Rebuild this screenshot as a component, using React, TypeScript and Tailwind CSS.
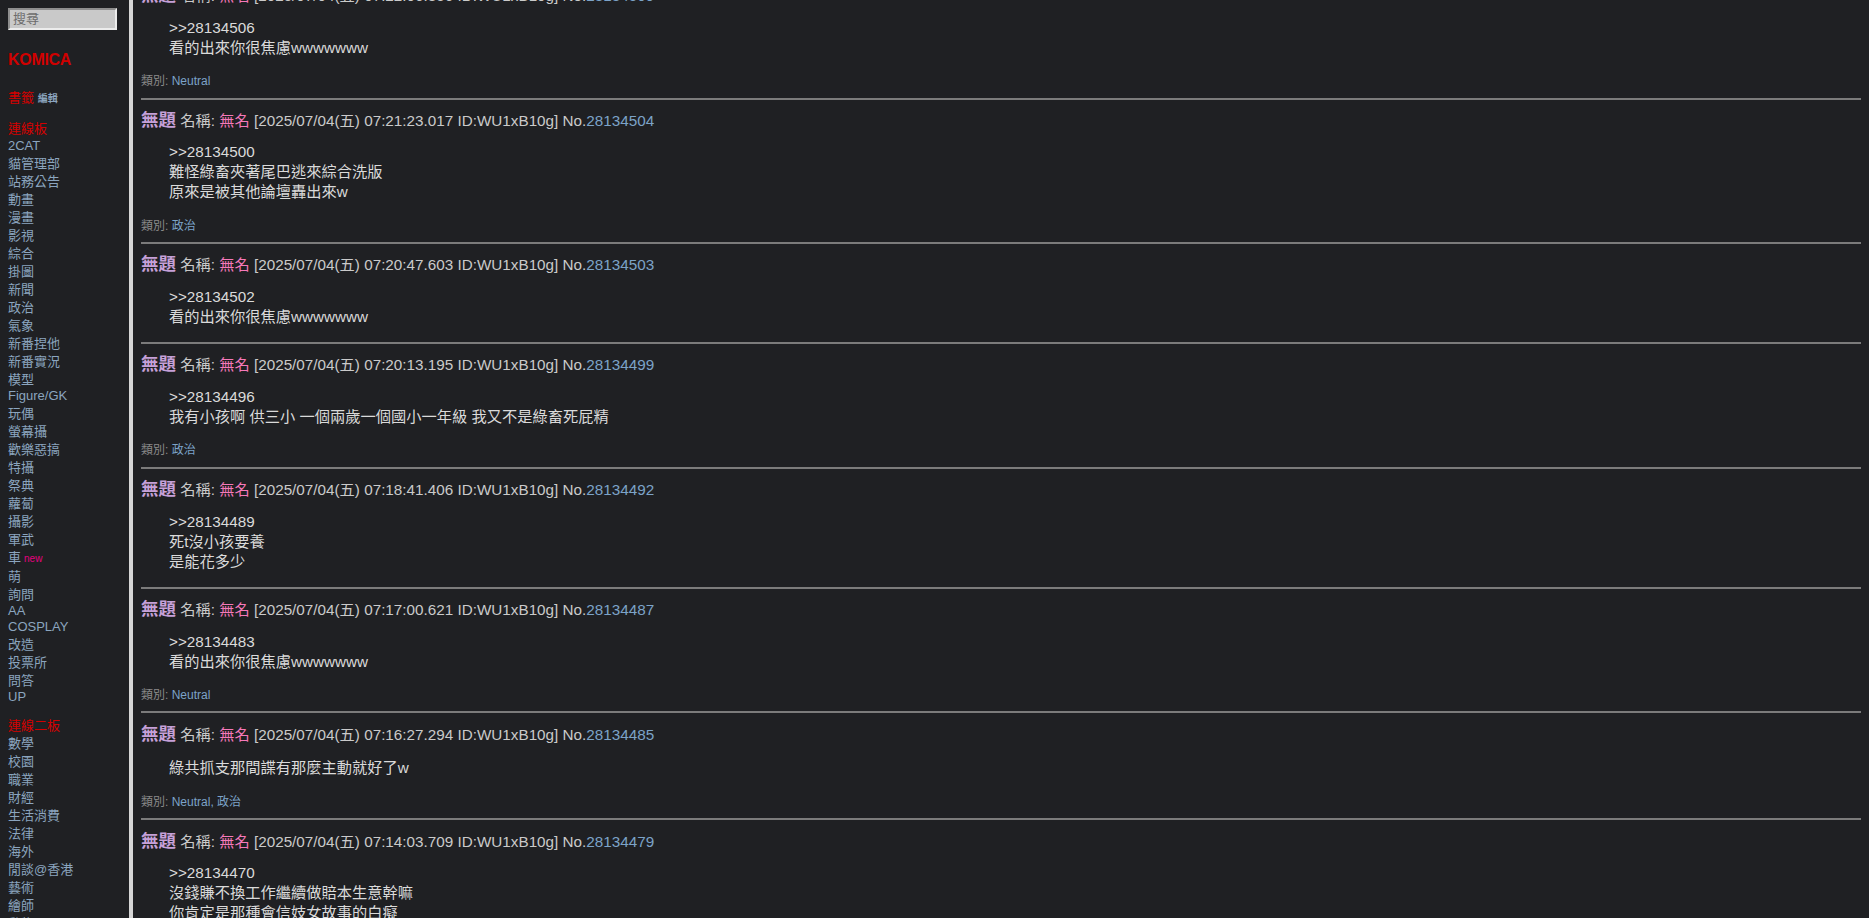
import React from "react";

const FONT = "font-['Liberation_Sans','Noto_Sans_CJK_TC',sans-serif]";

const isCjk = (s: string) => /[\u3000-\u9fff\uff00-\uffef]/.test(s);

const board1 = [
  "2CAT", "貓管理部", "站務公告", "動畫", "漫畫", "影視", "綜合", "掛圖", "新聞", "政治", "氣象",
  "新番捏他", "新番實況", "模型", "Figure/GK", "玩偶", "螢幕攝", "歡樂惡搞", "特攝", "祭典", "蘿蔔",
  "攝影", "軍武", "車", "萌", "詢問", "AA", "COSPLAY", "改造", "投票所", "問答", "UP",
];

const board2 = ["數學", "校園", "職業", "財經", "生活消費", "法律", "海外", "閒談@香港", "藝術", "繪師", "動物"];

type Post = { no: string; time: string; lines: string[]; cats?: string[] };

const posts: Post[] = [
  { no: "28134509", time: "07:22:06.356", lines: [">>28134506", "看的出來你很焦慮wwwwwww"], cats: ["Neutral"] },
  { no: "28134504", time: "07:21:23.017", lines: [">>28134500", "難怪綠畜夾著尾巴逃來綜合洗版", "原來是被其他論壇轟出來w"], cats: ["政治"] },
  { no: "28134503", time: "07:20:47.603", lines: [">>28134502", "看的出來你很焦慮wwwwwww"] },
  { no: "28134499", time: "07:20:13.195", lines: [">>28134496", "我有小孩啊 供三小 一個兩歲一個國小一年級 我又不是綠畜死屁精"], cats: ["政治"] },
  { no: "28134492", time: "07:18:41.406", lines: [">>28134489", "死t沒小孩要養", "是能花多少"] },
  { no: "28134487", time: "07:17:00.621", lines: [">>28134483", "看的出來你很焦慮wwwwwww"], cats: ["Neutral"] },
  { no: "28134485", time: "07:16:27.294", lines: ["綠共抓支那間諜有那麼主動就好了w"], cats: ["Neutral", "政治"] },
  { no: "28134479", time: "07:14:03.709", lines: [">>28134470", "沒錢賺不換工作繼續做賠本生意幹嘛", "你肯定是那種會信妓女故事的白癡"] },
];

function SideItem({ t }: { t: string }) {
  const cjk = isCjk(t);
  return (
    <div className={cjk ? "pt-[1.8px] leading-[16.2px] whitespace-nowrap" : "leading-[16.2px] whitespace-nowrap"}>
      <span className="text-[#8ba5bf] cursor-pointer">{t}</span>
      {t === "車" && <span className="ml-[3px] text-[10px] text-[#e3007f]">new</span>}
    </div>
  );
}

function Sidebar() {
  return (
    <div className={`w-[129px] shrink-0 h-full overflow-hidden bg-[#1f2023] px-2 pt-2 text-[13px] ${FONT}`}>
      <div className="h-[22px] w-[109px] border-2 border-t-[#8e8e8e] border-l-[#8e8e8e] border-b-[#ececec] border-r-[#ececec] bg-[#c9c9c9] pl-[3px] text-[13px] leading-[18px] text-[#6c6c6c]">
        搜尋
      </div>
      <div className="mt-[18.5px] h-[22px] leading-[22px] text-[16px] font-bold tracking-[-0.3px] text-[#d00000]">
        KOMICA
      </div>
      <div className="mt-[18px] pt-[1.8px] leading-[16.2px] whitespace-nowrap">
        <span className="text-[#d40000]">書籤</span>{" "}
        <span className="text-[10px] font-bold text-[#8ba5bf]">編輯</span>
      </div>
      <div className="mt-[12px]">
        <div className="pt-[1.8px] leading-[16.2px] text-[#d40000]">連線板</div>
        {board1.map((t) => (
          <SideItem key={t} t={t} />
        ))}
      </div>
      <div className="mt-[11px]">
        <div className="pt-[1.8px] leading-[16.2px] text-[#d40000]">連線二板</div>
        {board2.map((t) => (
          <SideItem key={t} t={t} />
        ))}
      </div>
    </div>
  );
}

function PostView({ p }: { p: Post }) {
  const cjkFirst = isCjk(p.lines[0].charAt(0));
  return (
    <div>
      <div className="mt-[10.2px] h-5 leading-5 whitespace-nowrap text-[15.25px] text-[#cacaca]">
        <span className="text-[17.5px] font-bold text-[#c6a0d8]">無題</span> 名稱: <span className="text-[#f679ba]">無名</span> [2025/07/04(五) {p.time} ID:WU1xB10g] No.<span className="text-[#7ca3c8]">{p.no}</span>
      </div>
      <div
        className={
          cjkFirst
            ? "mt-[12.5px] mb-[15.3px] pt-[2.4px] ml-[28px] leading-5 text-[15.25px] text-[#dadada]"
            : "mt-[12.5px] mb-[15.3px] ml-[28px] leading-5 text-[15.25px] text-[#dadada]"
        }
      >
        {p.lines.map((l, i) => (
          <div key={i} className="h-5 whitespace-nowrap">{l}</div>
        ))}
      </div>
      {p.cats && (
        <div className="mb-[8.6px] h-4 leading-4 text-[12px] text-[#8a8a8a]">
          類別:{" "}
          {p.cats.map((c, i) => (
            <React.Fragment key={c}>
              {i > 0 && <span className="text-[#7ca3c8]">, </span>}
              <span className="text-[#7ca3c8]">{c}</span>
            </React.Fragment>
          ))}
        </div>
      )}
      <div className="h-[2px] bg-[#7b7b7b]" />
    </div>
  );
}

export default function App() {
  return (
    <div className={`flex h-[918px] w-full overflow-hidden bg-[#1f2023] ${FONT}`}>
      <Sidebar />
      <div className="w-[4px] shrink-0 bg-[#d6d6d6]" />
      <div className="flex-1 h-full overflow-hidden bg-[#1f2023] px-2">
        <div className="-mt-[24.9px]">
          {posts.map((p) => (
            <PostView key={p.no} p={p} />
          ))}
        </div>
      </div>
    </div>
  );
}
